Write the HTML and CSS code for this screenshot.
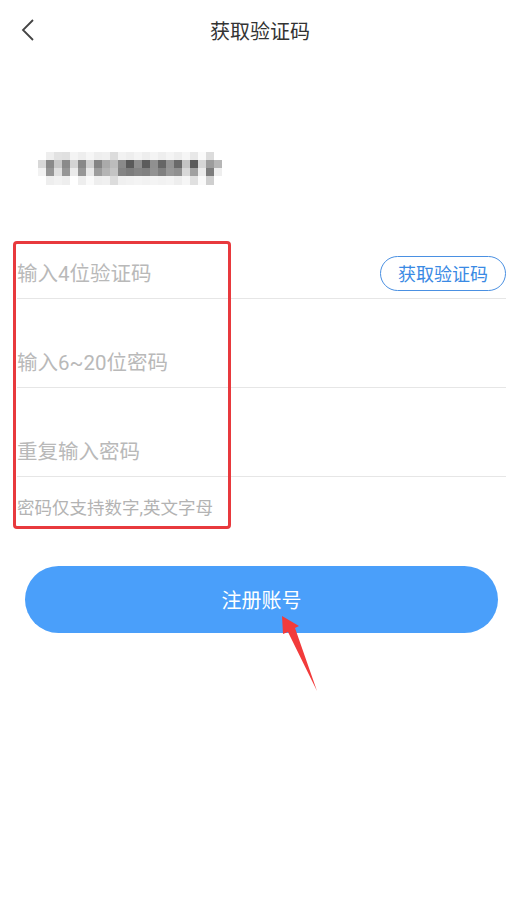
FILE: index.html
```html
<!DOCTYPE html>
<html lang="zh-CN">
<head>
  <meta charset="UTF-8" />
  <meta name="viewport" content="width=device-width, initial-scale=1.0"/>
  <title>获取验证码</title>
  <link rel="stylesheet" href="styles.css">
</head>
<body>
  <header class="nav-bar">
    <a class="back" href="#">
      <svg width="16" height="24" viewBox="0 0 16 24"><polyline points="12,2 2,12 12,22" fill="none" stroke="#444" stroke-width="1.8"/></svg>
    </a>
    <h1>获取验证码</h1>
  </header>

  <!-- phone number, blurred in the screenshot -->
  <div class="phone">
    <svg width="184" height="33" viewBox="0 0 184 33" id="phone-blur"></svg>
  </div>

  <form class="reg-form">
    <div class="field">
      <input type="text" placeholder="输入4位验证码">
      <button type="button" class="code-btn">获取验证码</button>
    </div>
    <div class="field">
      <input type="password" placeholder="输入6~20位密码">
    </div>
    <div class="field">
      <input type="password" placeholder="重复输入密码">
    </div>
    <p class="hint">密码仅支持数字,英文字母</p>
    <div class="mark-box"></div>
  </form>

  <div class="submit-wrap">
    <button type="button" class="submit-btn">注册账号</button>
  </div>

  <svg class="mark-arrow" width="50" height="90" viewBox="0 0 50 90">
    <path d="M7 6 L24 16 L20 18 L42 81 L13 22 L8 24 Z" fill="#f23b3b"/>
  </svg>

  <script>
    // rows: top, upper band, lower band, bottom
    const cols = [
      ['#fff', '#d8d8d8', '#f2f2f2', '#fff'],
      ['#eee', '#8a8a8a', '#969696', '#eee'],
      ['#e2e2e2', '#c8c8c8', '#e0e0e0', '#f2f2f2'],
      ['#e0e0e0', '#8a8a8a', '#969696', '#eee'],
      ['#f4f4f4', '#d4d4d4', '#ebebeb', '#fff'],
      ['#eee', '#888', '#969696', '#eee'],
      ['#f6f6f6', '#d0d0d0', '#e8e8e8', '#fafafa'],
      ['#eee', '#848484', '#9c9c9c', '#eee'],
      ['#f0f0f0', '#aaa', '#b4b4b4', '#f0f0f0'],
      ['#dcdcdc', '#bcbcbc', '#c4c4c4', '#dcdcdc'],
      ['#f2f2f2', '#8a8a8a', '#848484', '#f0f0f0'],
      ['#eee', '#5a5a5a', '#7c7c7c', '#f2f2f2'],
      ['#f4f4f4', '#8e8e8e', '#848484', '#f4f4f4'],
      ['#eee', '#5c5c5c', '#808080', '#f2f2f2'],
      ['#f4f4f4', '#909090', '#929292', '#f4f4f4'],
      ['#eee', '#666', '#808080', '#f2f2f2'],
      ['#f4f4f4', '#949494', '#989898', '#f4f4f4'],
      ['#eee', '#6a6a6a', '#909090', '#eee'],
      ['#f6f6f6', '#c4c4c4', '#d8d8d8', '#f6f6f6'],
      ['#e8e8e8', '#5a5a5a', '#a0a0a0', '#e0e0e0'],
      ['#fafafa', '#d6d6d6', '#ebebeb', '#fafafa'],
      ['#dcdcdc', '#9c9c9c', '#7c7c7c', '#cfcfcf'],
      ['#fff', '#b6b6b6', '#eee', '#fff']
    ];
    const svg = document.getElementById('phone-blur');
    const rowY = [0, 8, 16, 24];
    const rowH = [8, 8, 8, 9];
    let out = '';
    cols.forEach((c, i) => {
      c.forEach((color, r) => {
        out += `<rect x="${i * 8}" y="${rowY[r]}" width="8" height="${rowH[r]}" fill="${color}"/>`;
      });
    });
    svg.innerHTML = out;
  </script>
</body>
</html>
```

FILE: styles.css
```css
body {
  position: relative;
  min-height: 100vh;
  margin: 0;
  background: #fff;
  color: #333;
  font-family: Roboto, "Noto Sans CJK SC", sans-serif;
}
.nav-bar {
  position: relative;
  height: 60px;
  display: flex;
  align-items: center;
  justify-content: center;
}
.nav-bar h1 {
  margin: 0;
  font-size: 20px;
  font-weight: normal;
  color: #333;
}
.back {
  position: absolute;
  left: 21px;
  top: 18px;
  display: block;
  width: 16px;
  height: 24px;
}
.back svg {
  display: block;
}
.phone {
  margin-top: 92px;
  padding-left: 38px;
  height: 33px;
}
.phone svg {
  display: block;
}
.reg-form {
  position: relative;
  margin: 25px 14px 0 17px;
}
.field {
  height: 88px;
  border-bottom: 1px solid #e6e6e6;
  display: flex;
  align-items: flex-end;
  justify-content: space-between;
}
.field input {
  flex: 1;
  min-width: 0;
  height: 30px;
  margin: 0 0 9px;
  padding: 0;
  border: none;
  outline: none;
  font-family: inherit;
  font-size: 20.5px;
  color: #333;
  background: transparent;
}
.field input::placeholder {
  color: #b9b9b9;
}
.code-btn {
  width: 126px;
  height: 35px;
  margin-bottom: 7px;
  padding: 2px 0 0;
  border: 1.5px solid #4a90e2;
  border-radius: 18px;
  background: #fff;
  color: #3a8ae4;
  font-family: inherit;
  font-size: 18px;
  line-height: 1;
}
.hint {
  margin: 0;
  padding-top: 19px;
  line-height: 24px;
  font-size: 17.5px;
  color: #b3b3b3;
}
.mark-box {
  position: absolute;
  left: -4px;
  top: 31px;
  width: 218px;
  height: 288px;
  box-sizing: border-box;
  border: 3px solid #e8393d;
  border-radius: 4px;
}
.submit-wrap {
  margin: 46px 22px 0 25px;
}
.submit-btn {
  display: block;
  width: 100%;
  height: 67px;
  border: none;
  border-radius: 34px;
  background: #4a9ffa;
  color: #fff;
  font-family: inherit;
  font-size: 20px;
}
.mark-arrow {
  position: absolute;
  left: 275px;
  top: 610px;
  overflow: visible;
}
```
